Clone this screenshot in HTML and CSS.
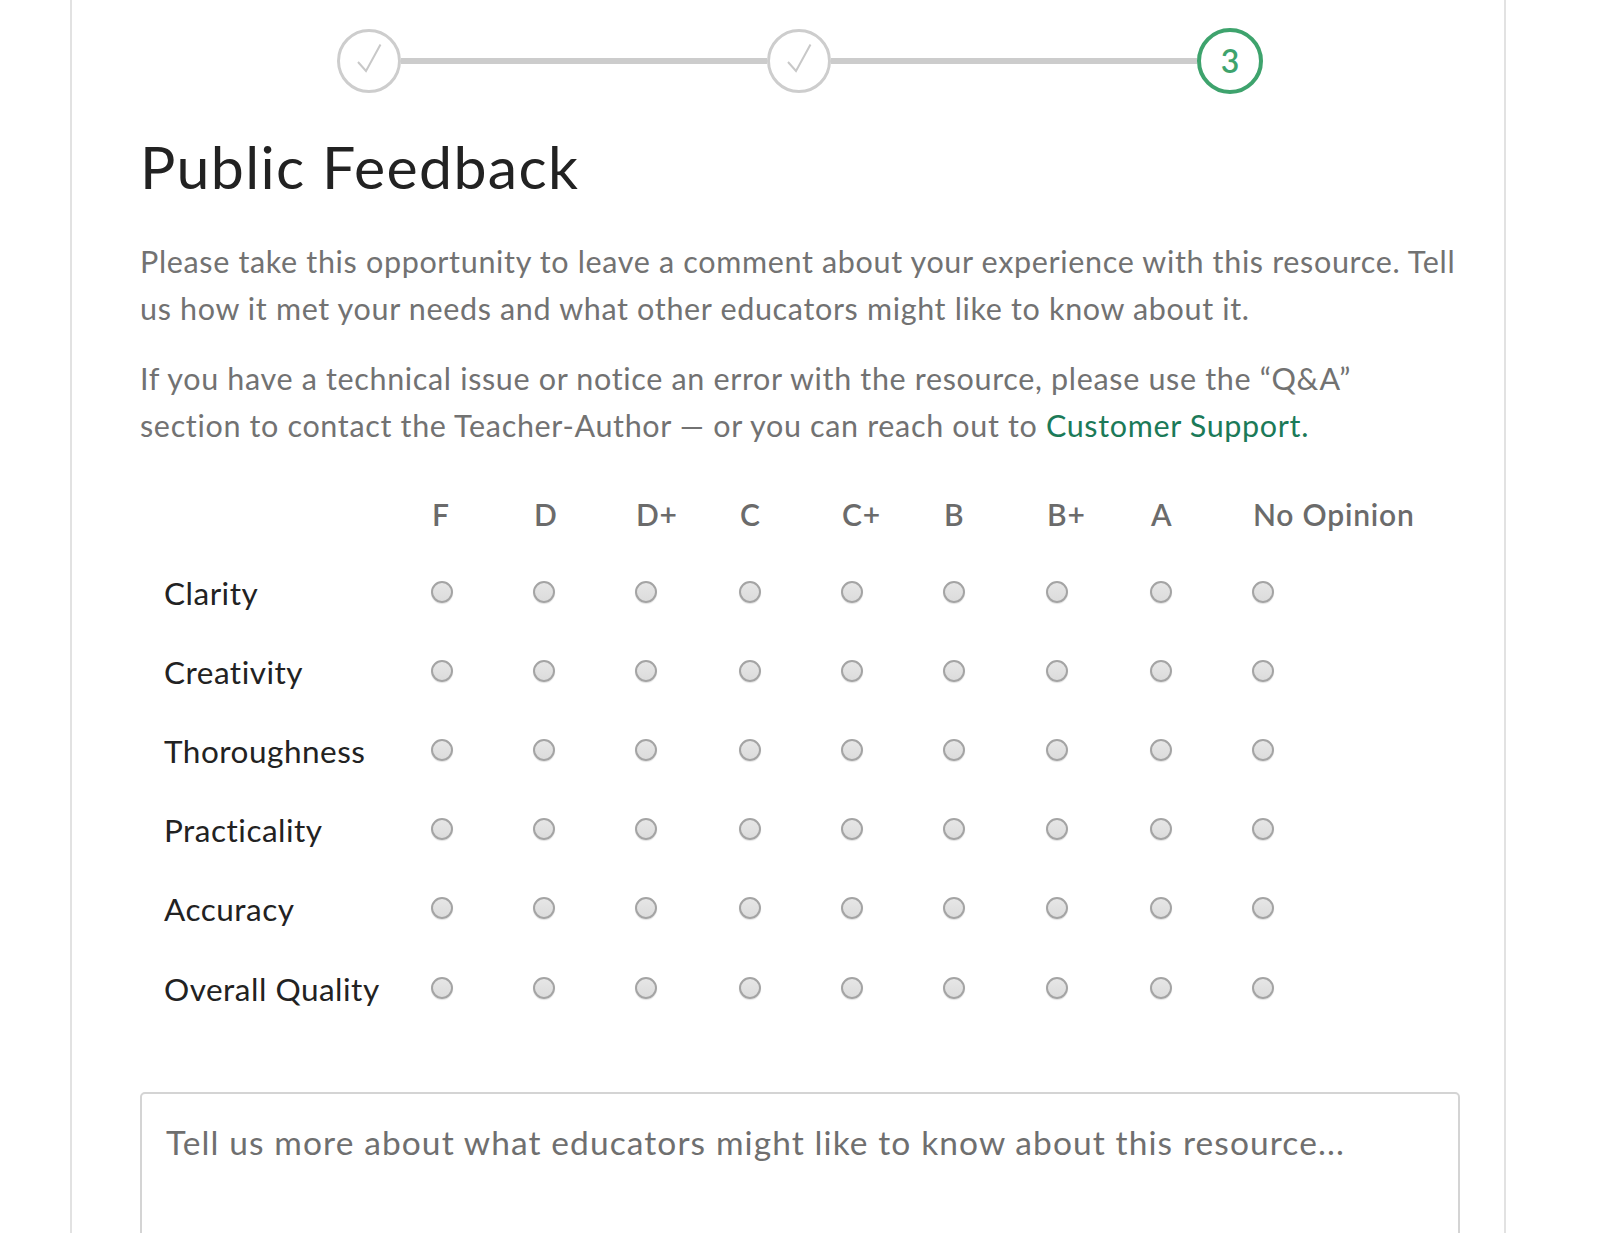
FILE: index.html
```html
<!DOCTYPE html>
<html lang="en">
<head>
<meta charset="utf-8">
<title>Public Feedback</title>
<link rel="stylesheet" href="styles.css">
</head>
<body>
<div class="card">
  <div class="steps">
    <div class="step step-done">
      <svg viewBox="0 0 64 64" width="64" height="64"><circle cx="32" cy="32" r="30.5" fill="none" stroke="#cdcdcd" stroke-width="3"/><path d="M21 33 L29 42 L43.5 15.5" fill="none" stroke="#c8c8c8" stroke-width="2"/></svg>
    </div>
    <div class="step-line"></div>
    <div class="step step-done">
      <svg viewBox="0 0 64 64" width="64" height="64"><circle cx="32" cy="32" r="30.5" fill="none" stroke="#cdcdcd" stroke-width="3"/><path d="M21 33 L29 42 L43.5 15.5" fill="none" stroke="#c8c8c8" stroke-width="2"/></svg>
    </div>
    <div class="step-line"></div>
    <div class="step step-current">3</div>
  </div>

  <h1 class="title">Public Feedback</h1>

  <p class="intro">Please take this opportunity to leave a comment about your experience with this resource. Tell us how it met your needs and what other educators might like to know about it.</p>
  <p class="intro">If you have a technical issue or notice an error with the resource, please use the “Q&amp;A” section to contact the Teacher-Author — or you can reach out to <a class="link" href="#">Customer Support.</a></p>

  <div class="grid">
    <div class="cell head"></div>
    <div class="cell head">F</div>
    <div class="cell head">D</div>
    <div class="cell head">D+</div>
    <div class="cell head">C</div>
    <div class="cell head">C+</div>
    <div class="cell head">B</div>
    <div class="cell head">B+</div>
    <div class="cell head">A</div>
    <div class="cell head">No Opinion</div>

    <div class="cell label">Clarity</div>
    <div class="cell"><input type="radio" name="r1"></div><div class="cell"><input type="radio" name="r1"></div><div class="cell"><input type="radio" name="r1"></div><div class="cell"><input type="radio" name="r1"></div><div class="cell"><input type="radio" name="r1"></div><div class="cell"><input type="radio" name="r1"></div><div class="cell"><input type="radio" name="r1"></div><div class="cell"><input type="radio" name="r1"></div><div class="cell"><input type="radio" name="r1"></div>

    <div class="cell label">Creativity</div>
    <div class="cell"><input type="radio" name="r2"></div><div class="cell"><input type="radio" name="r2"></div><div class="cell"><input type="radio" name="r2"></div><div class="cell"><input type="radio" name="r2"></div><div class="cell"><input type="radio" name="r2"></div><div class="cell"><input type="radio" name="r2"></div><div class="cell"><input type="radio" name="r2"></div><div class="cell"><input type="radio" name="r2"></div><div class="cell"><input type="radio" name="r2"></div>

    <div class="cell label">Thoroughness</div>
    <div class="cell"><input type="radio" name="r3"></div><div class="cell"><input type="radio" name="r3"></div><div class="cell"><input type="radio" name="r3"></div><div class="cell"><input type="radio" name="r3"></div><div class="cell"><input type="radio" name="r3"></div><div class="cell"><input type="radio" name="r3"></div><div class="cell"><input type="radio" name="r3"></div><div class="cell"><input type="radio" name="r3"></div><div class="cell"><input type="radio" name="r3"></div>

    <div class="cell label">Practicality</div>
    <div class="cell"><input type="radio" name="r4"></div><div class="cell"><input type="radio" name="r4"></div><div class="cell"><input type="radio" name="r4"></div><div class="cell"><input type="radio" name="r4"></div><div class="cell"><input type="radio" name="r4"></div><div class="cell"><input type="radio" name="r4"></div><div class="cell"><input type="radio" name="r4"></div><div class="cell"><input type="radio" name="r4"></div><div class="cell"><input type="radio" name="r4"></div>

    <div class="cell label">Accuracy</div>
    <div class="cell"><input type="radio" name="r5"></div><div class="cell"><input type="radio" name="r5"></div><div class="cell"><input type="radio" name="r5"></div><div class="cell"><input type="radio" name="r5"></div><div class="cell"><input type="radio" name="r5"></div><div class="cell"><input type="radio" name="r5"></div><div class="cell"><input type="radio" name="r5"></div><div class="cell"><input type="radio" name="r5"></div><div class="cell"><input type="radio" name="r5"></div>

    <div class="cell label">Overall Quality</div>
    <div class="cell"><input type="radio" name="r6"></div><div class="cell"><input type="radio" name="r6"></div><div class="cell"><input type="radio" name="r6"></div><div class="cell"><input type="radio" name="r6"></div><div class="cell"><input type="radio" name="r6"></div><div class="cell"><input type="radio" name="r6"></div><div class="cell"><input type="radio" name="r6"></div><div class="cell"><input type="radio" name="r6"></div><div class="cell"><input type="radio" name="r6"></div>
  </div>

  <textarea class="comment" placeholder="Tell us more about what educators might like to know about this resource..."></textarea>
</div>
</body>
</html>
```

FILE: styles.css
```css
* { box-sizing: border-box; }

html, body {
  margin: 0;
  padding: 0;
  background: #ffffff;
  overflow: hidden;
}

body {
  font-family: "Lato", "Open Sans", sans-serif;
  color: #222222;
}

.card {
  margin-left: 70px;
  width: 1436px;
  min-height: 1300px;
  border-left: 2px solid #e2e2e2;
  border-right: 2px solid #e2e2e2;
  padding: 28px 44px 0 68px;
}

.steps {
  width: 926px;
  margin: 0 auto;
  display: flex;
  align-items: center;
}

.step {
  flex: none;
  display: flex;
  align-items: center;
  justify-content: center;
}

.step-done {
  width: 64px;
  height: 64px;
}

.step-done svg { display: block; }

.step-current {
  width: 66px;
  height: 66px;
  border: 4px solid #3ea36d;
  border-radius: 50%;
  color: #3ea36d;
  font-size: 32px;
  font-weight: 600;
  line-height: 1;
  padding-bottom: 1px;
}

.step-line {
  flex: 1;
  height: 6px;
  background: #cccccc;
}

.title {
  margin: 36px 0 0;
  font-size: 59px;
  font-weight: 400;
  line-height: 74px;
  color: #222222;
  letter-spacing: 1.35px;
}

.intro {
  margin: 34px 0 0;
  font-size: 30.5px;
  line-height: 47px;
  color: #727272;
  letter-spacing: 0.66px;
}

.intro + .intro {
  margin-top: 23px;
}

.link {
  color: #1b7a58;
  text-decoration: none;
}

.grid {
  margin-top: 26px;
  display: grid;
  grid-template-columns: 291px 102px 102px 104px 102px 102px 103px 104px 102px 1fr;
  grid-template-rows: 77px repeat(6, 79.2px);
}

.cell {
  display: flex;
  align-items: center;
}

.head {
  font-size: 30px;
  font-weight: 600;
  color: #6b6b6b;
  padding-left: 1px;
  letter-spacing: 0.8px;
}

.label {
  padding-left: 24px;
  padding-top: 2px;
  font-size: 31.5px;
  color: #222222;
  letter-spacing: 0.5px;
}

.cell input[type="radio"] {
  appearance: none;
  -webkit-appearance: none;
  margin: 0;
  width: 22px;
  height: 22px;
  border-radius: 50%;
  border: 2px solid #a4a4a4;
  background: linear-gradient(#e6e6e6, #dcdcdc);
  box-shadow: 0 1px 1px rgba(0, 0, 0, 0.12);
}

.comment {
  display: block;
  margin-top: 65px;
  width: 100%;
  height: 200px;
  border: 2px solid #d4d4d4;
  border-radius: 5px;
  padding: 26px 24px;
  font-family: "Lato", "Open Sans", sans-serif;
  font-size: 33.5px;
  line-height: 44px;
  letter-spacing: 1.1px;
  color: #222;
  resize: none;
  outline: none;
}

.comment::placeholder {
  color: #6f6f6f;
}
```
